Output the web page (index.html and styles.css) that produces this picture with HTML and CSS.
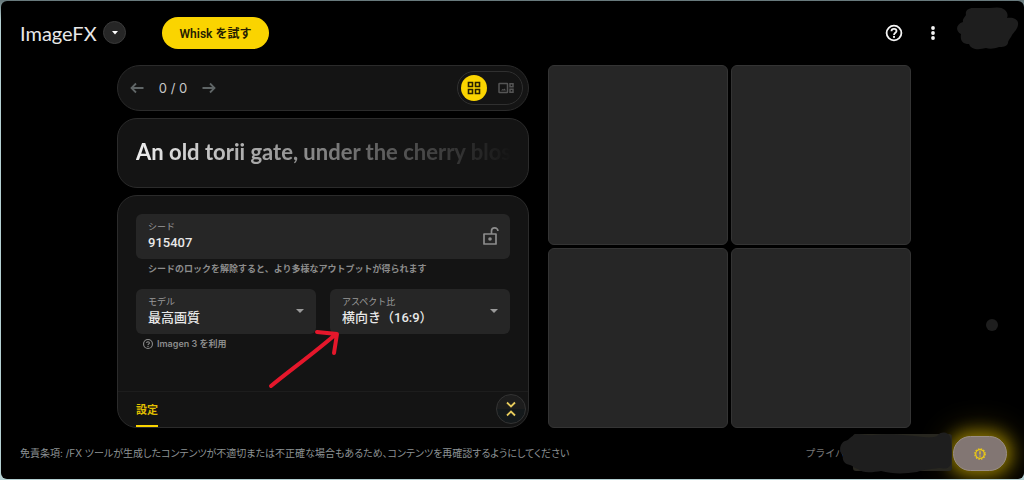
FILE: index.html
```html
<!DOCTYPE html>
<html lang="ja">
<head>
  <meta charset="UTF-8">
  <meta name="viewport" content="width=device-width, initial-scale=1.0">
  <title>ImageFX</title>
  <link rel="stylesheet" href="styles.css">
</head>
<body>

<div class="app">
  <header class="header">
    <h1 class="logo">ImageFX</h1>
    <button class="tool-switch" aria-label="ツールを切り替え">
      <svg width="8" height="4" viewBox="0 0 8 4"><path d="M1 0h6L4 3.5z" fill="#fff"/></svg>
    </button>
    <button class="whisk-btn">Whisk を試す</button>
    <div class="header-actions">
      <button class="icon-btn" aria-label="ヘルプ">
        <svg width="18" height="18" viewBox="0 0 18 18" fill="none" stroke="#f4f4f4" stroke-width="1.8">
          <circle cx="9" cy="9" r="7.4"/>
          <path d="M6.5 7.2C6.5 5.7 7.6 4.9 9 4.9s2.5.9 2.5 2.2C11.5 8.7 9 8.9 9 11"/>
          <circle cx="9" cy="12.9" r="1.1" fill="#f4f4f4" stroke="none"/>
        </svg>
      </button>
      <button class="icon-btn" aria-label="メニュー">
        <svg width="18" height="18" viewBox="0 0 18 18" fill="#f4f4f4">
          <circle cx="9" cy="4" r="1.9"/><circle cx="9" cy="9" r="1.9"/><circle cx="9" cy="14" r="1.9"/>
        </svg>
      </button>
      <svg class="avatar" width="62" height="44" viewBox="0 0 62 44" fill="#1e1e1e">
        <path d="M16 1H33C40 0 45 0 48 3C51 6 51 9 50 11C57 10 62 13 61 18C60 23 57 25 55 28C54 31 51 33 51 36C50 40 45 40 42 40C37 42 32 42 29 41C22 43 14 43 12 37C5 37 3 33 4 27C-2 24 -1 17 6 15C5 12 8 10 9 8C8 4 11 1 16 1Z"/>
      </svg>
    </div>
  </header>

  <main class="main">
    <div class="panel">
      <div class="card toolbar">
        <button class="icon-btn" aria-label="前へ">
          <svg width="14" height="12" viewBox="0 0 14 12" fill="none" stroke="#5f6566" stroke-width="1.8"><path d="M13.5 6H1.5M6 1.5L1.5 6L6 10.5"/></svg>
        </button>
        <span class="counter">0 / 0</span>
        <button class="icon-btn" aria-label="次へ">
          <svg width="14" height="12" viewBox="0 0 14 12" fill="none" stroke="#5f6566" stroke-width="1.8"><path d="M.5 6h12M8 1.5L12.5 6L8 10.5"/></svg>
        </button>
        <div class="view-toggle">
          <button class="view-btn active" aria-label="グリッド表示">
            <svg width="14" height="14" viewBox="0 0 14 14" fill="none" stroke="#262000" stroke-width="1.6">
              <path d="M1.5 1.5h4v4h-4zM8.5 1.5h4v4h-4zM1.5 8.5h4v4h-4zM8.5 8.5h4v4h-4z"/>
            </svg>
          </button>
          <button class="view-btn" aria-label="詳細表示">
            <svg width="16" height="12" viewBox="0 0 16 12" fill="none" stroke="#555" stroke-width="1.5">
              <rect x="1" y="1.5" width="8.5" height="9" rx=".5"/>
              <path d="M12 1.8h3v3h-3zM12 7.2h3v3h-3z"/>
              <path d="M3 8.5l1.5-1.5 1 .6L6.5 6.4 8 8.5z" fill="#555" stroke="none"/>
            </svg>
          </button>
        </div>
      </div>

      <div class="card prompt">
        <input class="prompt-input" type="text" aria-label="プロンプト" value="An old torii gate, under the cherry blos">
      </div>

      <div class="card settings">
        <div class="settings-body">
          <div class="field">
            <label for="seed">シード</label>
            <input id="seed" type="text" value="915407">
            <button class="lock-btn" aria-label="シードをロック">
              <svg width="18" height="20" viewBox="0 0 18 20" fill="none" stroke="#8c8c8c" stroke-width="1.7">
                <path d="M2 8h12v10H2z" stroke-linejoin="round"/>
                <path d="M9.5 8V5a3.2 3.2 0 0 1 6.4 0"/>
                <circle cx="8" cy="13" r="1.8" fill="#8c8c8c" stroke="none"/>
              </svg>
            </button>
          </div>
          <p class="hint">シードのロックを解除すると、より多様なアウトプットが得られます</p>

          <div class="field-row">
            <div class="field">
              <label for="model">モデル</label>
              <select id="model"><option>最高画質</option></select>
              <svg class="caret" width="8" height="4" viewBox="0 0 8 4"><path d="M0 0h8L4 4z" fill="#9a9a9a"/></svg>
            </div>
            <div class="field">
              <label for="aspect">アスペクト比</label>
              <select id="aspect"><option>横向き（16:9）</option></select>
              <svg class="caret" width="8" height="4" viewBox="0 0 8 4"><path d="M0 0h8L4 4z" fill="#9a9a9a"/></svg>
            </div>
          </div>
          <p class="hint model-hint">
            <svg width="10" height="10" viewBox="0 0 18 18" fill="none" stroke="#8c8c8c" stroke-width="2">
              <circle cx="9" cy="9" r="8"/>
              <path d="M6.5 7.2C6.5 5.7 7.6 4.9 9 4.9s2.5.9 2.5 2.2C11.5 8.7 9 8.9 9 11"/>
              <circle cx="9" cy="13.5" r="1.2" fill="#8c8c8c" stroke="none"/>
            </svg>
            Imagen 3 を利用
          </p>
        </div>
        <div class="tabs">
          <button class="tab">設定</button>
          <button class="collapse-btn" aria-label="折りたたむ">
            <svg width="10" height="16" viewBox="0 0 10 16" fill="none" stroke="#e6cb5c" stroke-width="1.8"><path d="M1 1.5l4 4 4-4M1 14.5l4-4 4 4"/></svg>
          </button>
        </div>

        <!-- hand-drawn pointer to the aspect ratio field -->
        <svg class="pointer" width="74" height="62" viewBox="0 0 74 62" fill="none" stroke="#e5172b" stroke-width="4" stroke-linecap="round" stroke-linejoin="round">
          <path d="M4 58C22 43 46 26 69 6M50 4L70 6L67 25"/>
        </svg>
      </div>
    </div>

    <div class="gallery">
      <div class="tile"></div>
      <div class="tile"></div>
      <div class="tile"></div>
      <div class="tile"></div>
    </div>
  </main>

  <footer class="footer">
    <p class="disclaimer">免責条項: /FX ツールが生成したコンテンツが不適切または不正確な場合もあるため、コンテンツを再確認するようにしてください</p>
    <a class="privacy" href="#">プライバ</a>
  </footer>

  <span class="dot"></span>
  <button class="feedback-btn" aria-label="フィードバック">
    <svg width="12" height="12" viewBox="0 0 12 12" fill="none" stroke="#f0cd12">
      <circle cx="6" cy="6" r="4.3" stroke-width="1.2"/>
      <circle cx="6" cy="6" r="5.2" stroke-width="1.2" stroke-dasharray="1.5 1.222"/>
      <path d="M6 3.3v3.3M6 7.6v1.2" stroke-width="1.3"/>
    </svg>
  </button>
  <svg class="scribble" width="114" height="42" viewBox="0 0 114 42">
    <rect x="13" y="2" width="99" height="37" rx="3" fill="#282720"/>
    <path d="M17 2C23 2 28 4 34 3C49 1 67 3 83 5C91 6 97 5 98 3C101 -1 109 0 110 5C112 11 111 23 111 31C110 37 105 37 99 36C91 37 82 38 77 40C64 42 52 42 41 39C34 40 23 42 18 37C13 36 14 34 10 33C4 32 2 28 3 23C-2 20 0 11 5 9C10 8 11 3 17 2Z" fill="#1e1e1e"/>
  </svg>
</div>

</body>
</html>
```

FILE: styles.css
```css
* {
  margin: 0;
  padding: 0;
  box-sizing: border-box;
}

body {
  min-height: 100vh;
  display: flex;
  padding: 1px 0 1px 1px;
  background: linear-gradient(to bottom, #66777a, #b4d0d2 20px);
  font-family: Inter, "Noto Sans CJK JP", sans-serif;
  color: #e8e8e8;
}

button,
input,
select {
  font: inherit;
  color: inherit;
  border: none;
  background: none;
}

button {
  display: flex;
  align-items: center;
  justify-content: center;
  cursor: pointer;
}

.app {
  position: relative;
  flex: 1;
  display: flex;
  flex-direction: column;
  background: #000;
  border-radius: 6px;
  overflow: hidden;
}

/* Header */
.header {
  display: flex;
  align-items: center;
  height: 63px;
  padding: 0 5px 0 19px;
}

.logo {
  width: 77px;
  font-family: Lato, sans-serif;
  font-size: 20px;
  font-weight: 400;
}

.tool-switch {
  width: 23px;
  height: 23px;
  margin-left: 6px;
  border: 1px solid #3a3a3a;
  border-radius: 50%;
  background: #262626;
}

.whisk-btn {
  width: 107px;
  height: 32px;
  margin-left: 36px;
  border-radius: 16px;
  background: #fad400;
  color: #262000;
  font-family: Roboto, "Noto Sans CJK JP", sans-serif;
  font-size: 12px;
  font-weight: 600;
}

.header-actions {
  display: flex;
  align-items: center;
  gap: 21px;
  margin-left: auto;
}

.avatar {
  margin: -8px 0 0 -6px;
}

/* Main */
.main {
  display: grid;
  grid-template-columns: 1fr 363px;
  gap: 19px;
  padding: 1px 113px 0 116px;
}

.panel {
  display: flex;
  flex-direction: column;
  gap: 7px;
}

.card {
  border: 1px solid #2b2b2b;
  border-radius: 20px;
  background: #141414;
}

.toolbar {
  display: flex;
  align-items: center;
  height: 46px;
  padding: 0 5px 0 12px;
  border-radius: 23px;
}

.counter {
  width: 58px;
  font-size: 13px;
  text-align: center;
  color: #c8c8c8;
}

.view-toggle {
  display: flex;
  align-items: center;
  gap: 6px;
  height: 34px;
  margin-left: auto;
  padding: 0 3px;
  border: 1px solid #303030;
  border-radius: 17px;
}

.view-btn {
  width: 26px;
  height: 26px;
  border-radius: 50%;
}

.view-btn.active {
  background: #fad400;
}

.prompt {
  height: 70px;
  padding: 16px 15px 0 18px;
}

.prompt-input {
  width: 100%;
  height: 32px;
  font-family: Lato, sans-serif;
  font-size: 22px;
  font-weight: 700;
  color: #eee;
  -webkit-mask-image: linear-gradient(to right, #000, transparent);
  mask-image: linear-gradient(to right, #000, transparent);
}

.settings {
  position: relative;
  flex: 1;
  display: flex;
  flex-direction: column;
}

.settings-body {
  padding: 18px 18px 0;
}

.field {
  position: relative;
  flex: 1;
  height: 45px;
  padding: 6px 12px;
  border-radius: 6px;
  background: #262626;
}

.field label {
  display: block;
  font-size: 9px;
  line-height: 14px;
  color: #9a9a9a;
}

.field input,
.field select {
  display: block;
  width: 100%;
  height: 18px;
  font-family: Roboto, "Noto Sans CJK JP", sans-serif;
  font-size: 13px;
  line-height: 18px;
  font-weight: 500;
  appearance: none;
}

.lock-btn {
  position: absolute;
  top: 12px;
  right: 10px;
}

.caret {
  position: absolute;
  top: 20px;
  right: 12px;
}

.hint {
  padding: 3px 12px 0;
  font-size: 9px;
  line-height: 14px;
  font-weight: 600;
  color: #8c8c8c;
}

.field-row {
  display: flex;
  gap: 14px;
  margin-top: 13px;
}

.model-hint {
  display: flex;
  align-items: center;
  gap: 4px;
  padding-left: 7px;
}

.tabs {
  display: flex;
  justify-content: space-between;
  height: 36px;
  margin-top: auto;
  padding: 0 2px 0 18px;
  border-top: 1px solid #1d1d1d;
}

.tab {
  border-bottom: 2px solid #fad400;
  color: #e0bf00;
  font-size: 11px;
  font-weight: 700;
}

.collapse-btn {
  width: 30px;
  height: 30px;
  margin-top: 2px;
  border: 1px solid #333;
  border-radius: 50%;
  background: linear-gradient(#1d1d1d 50%, #14191b 50%);
}

.pointer {
  position: absolute;
  top: 132px;
  left: 149px;
}

/* Gallery */
.gallery {
  display: grid;
  grid-template-columns: 1fr 1fr;
  gap: 3px;
}

.tile {
  aspect-ratio: 1;
  border: 1px solid #343434;
  border-radius: 6px;
  background: #262626;
}

/* Footer */
.footer {
  display: flex;
  align-items: center;
  justify-content: space-between;
  flex: 1;
  padding: 0 179px 2px 19px;
  font-size: 10px;
  line-height: 16px;
  color: #8c9294;
}

.disclaimer {
  font-feature-settings: "palt";
}

.privacy {
  color: #777;
  text-decoration: none;
}

.dot {
  position: absolute;
  right: 26px;
  bottom: 148px;
  width: 12px;
  height: 12px;
  border-radius: 50%;
  background: #1e1e1e;
}

.scribble {
  position: absolute;
  right: 70px;
  bottom: 5px;
}

.feedback-btn {
  position: absolute;
  right: 17px;
  bottom: 8px;
  width: 54px;
  height: 35px;
  border: 1px solid #9a8e86;
  border-radius: 18px;
  background: #827673;
  box-shadow: 0 0 16px 4px #8a7400, 0 0 30px 8px #332b00;
}
```
